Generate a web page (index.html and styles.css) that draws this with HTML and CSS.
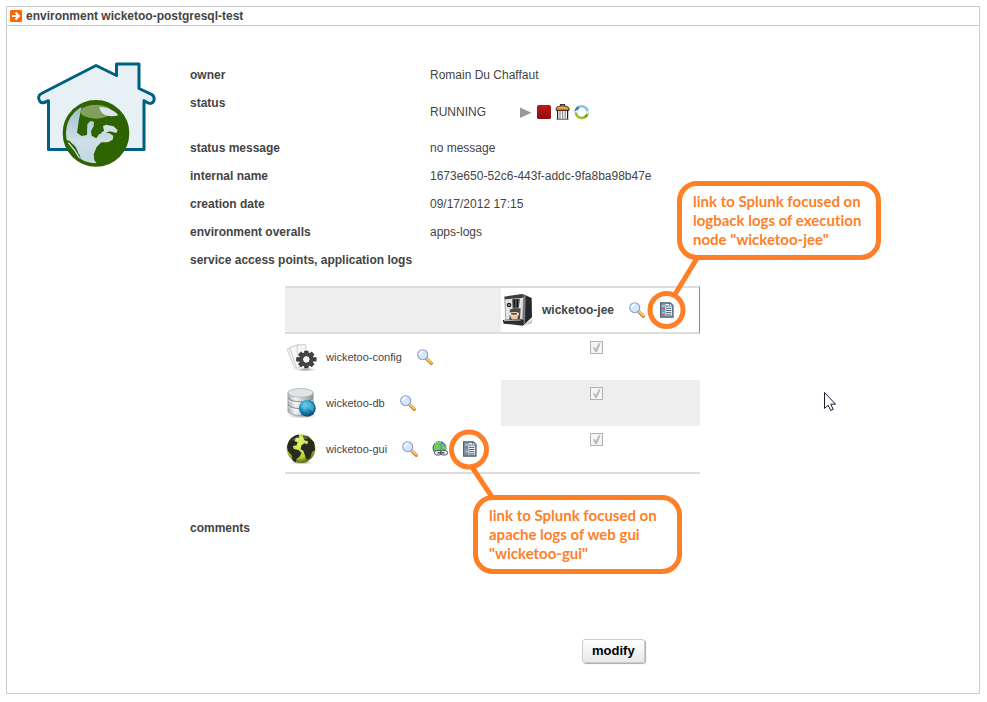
FILE: index.html
```html
<!DOCTYPE html>
<html lang="en">
<head>
<meta charset="utf-8">
<title>environment wicketoo-postgresql-test</title>
<link rel="stylesheet" href="styles.css">
</head>
<body>
<svg class="defs" aria-hidden="true">
  <defs>
    <linearGradient id="handle" x1="0" y1="0" x2="1" y2="1"><stop offset="0" stop-color="#ffd48a"/><stop offset="1" stop-color="#d98a18"/></linearGradient>
    <linearGradient id="metal" x1="0" y1="0" x2="1" y2="0"><stop offset="0" stop-color="#a9afb3"/><stop offset=".3" stop-color="#f2f4f5"/><stop offset="1" stop-color="#8d9397"/></linearGradient>
    <linearGradient id="ocean" x1="0" y1="0" x2="0" y2="1"><stop offset="0" stop-color="#9dbfcb"/><stop offset=".6" stop-color="#cfdfe7"/><stop offset="1" stop-color="#c3d8e2"/></linearGradient>
    <linearGradient id="red" x1="0" y1="0" x2="0" y2="1"><stop offset="0" stop-color="#c01818"/><stop offset="1" stop-color="#8c0c10"/></linearGradient>
    <linearGradient id="lid" x1="0" y1="0" x2="0" y2="1"><stop offset="0" stop-color="#ffc070"/><stop offset="1" stop-color="#e67a10"/></linearGradient>
    <radialGradient id="blueball" cx=".4" cy=".3" r=".7"><stop offset="0" stop-color="#7fd8ee"/><stop offset=".5" stop-color="#1f93bf"/><stop offset="1" stop-color="#07466c"/></radialGradient>
    <radialGradient id="limeball" cx=".45" cy=".35" r=".65"><stop offset="0" stop-color="#e4f56a"/><stop offset=".7" stop-color="#b6d529"/><stop offset="1" stop-color="#526a10"/></radialGradient>
    <radialGradient id="shade"><stop offset="0" stop-color="#000" stop-opacity=".4"/><stop offset="1" stop-color="#000" stop-opacity="0"/></radialGradient>
    <symbol id="magnifier" viewBox="0 0 16 16">
      <path d="M10 10l4.300 4.300" stroke="#b98232" stroke-width="3.200" stroke-linecap="round"/>
      <path d="M10 9.600l4.400 4.400" stroke="url(#handle)" stroke-width="2" stroke-linecap="round"/>
      <path d="M10 9.300l4.600 4.600" stroke="#ffc86a" stroke-width="1.400" stroke-linecap="round"/>
      <circle cx="5.700" cy="5.700" r="5" fill="#d3e9fb" stroke="#8f9bd2" stroke-width="1.100"/>
      <path d="M2.600 6a3.200 3.200 0 0 1 3.200-3.400" fill="none" stroke="#fff" stroke-width="1.600"/>
    </symbol>
    <symbol id="log" viewBox="0 0 16 16">
      <path d="M1.600.8h9.600l2.800 2.800v11.600H1.600z" fill="#8799a8" stroke="#4c6478" stroke-width="1.200"/>
      <path d="M6.500 2h4.200l2.300 2.200v9.500H6.500z" fill="#eef3f7"/>
      <path d="M10.500 1v3.200h3.300z" fill="#fff" stroke="#4c6478" stroke-width=".7"/>
      <path d="M7 4h2.500M7 6.300h5.300M7 8.500h5.300M7 10.700h5.300M7 12.900h5.300" stroke="#344c60" stroke-width=".9"/>
      <path d="M3.300 4h2.200M3.300 10.700h2.200" stroke="#8fd6fa" stroke-width="1.300"/>
      <path d="M3.300 6.400h2.200M3.300 12.800h2.200" stroke="#f04a30" stroke-width="1.500"/>
      <path d="M3.300 8.500h2.200" stroke="#55aee4" stroke-width="1.300"/>
    </symbol>
  </defs>
</svg>

<main class="panel">
  <header class="panel-title">
    <svg class="bullet" viewBox="0 0 12 12" aria-hidden="true"><rect width="12" height="12" rx="1" fill="#ff6600"/><path d="M2 6h6.500M5.500 2.500L9 6 5.500 9.500" fill="none" stroke="#fff" stroke-width="2"/></svg>
    <h1>environment wicketoo-postgresql-test</h1>
  </header>

  <div class="content">
    <svg class="house" viewBox="-1 -1 120 106" aria-hidden="true">
      <path d="M59 3.500L79.500 13.500V2H102v24.500l13 6.200c3 2 3 7-.5 8.500-3 1-5-1-7.500-2.500V87.500H11.500V38.700C8 40.500 5 42 3 39.500c-2.500-3-1.500-6.500 1.500-8z" fill="#e7f0f4" stroke="#006080" stroke-width="3" stroke-linejoin="round"/>
      <g transform="scale(.3333) translate(-111 -186)">
        <circle cx="288" cy="400" r="97" fill="#2d6300"/>
        <path d="M245 320l-8 38-6 40 14 10 16-3 1-32 9-10 11 2-1 14-8 14 2 14 14 8 8-12 10-4 20 0 13 8-2 12-14 8-20 0-14 14-9 22 2 18 8 10-46-6-7-22-14-28-14-12-14-4-6-20 10-48 20-26z" fill="url(#ocean)"/>
        <path d="M302 399l10-6-3-15 10-4 22 5 12 12-4 8-20-5-14 6z" fill="#d2e1e8"/>
        <path d="M205 428l18 22 18 28M212 424l20 18 6 20" stroke="#cfdfe7" stroke-width="4" fill="none"/>
        <ellipse cx="288" cy="335" rx="46" ry="21" fill="#80a05b"/>
        <path d="M298 321c28 0 48 13 57 25-20 5-52 6-57-25z" fill="#d7e6ed"/>
        <circle cx="288" cy="400" r="95" fill="none" stroke="#2d6300" stroke-width="10"/>
      </g>
    </svg>

    <div class="details">
      <dl class="fields">
        <dt>owner</dt><dd>Romain Du Chaffaut</dd>
        <dt class="tall">status</dt>
        <dd class="tall status">
          <span class="state">RUNNING</span>
          <button type="button" class="icon-button" aria-label="start"><svg viewBox="0 0 16 16"><path d="M3 3.500L14.500 8.800 3 14z" fill="#999"/></svg></button>
          <button type="button" class="icon-button" aria-label="stop"><svg viewBox="0 0 16 16"><rect x="1" y="1" width="14" height="14" rx="1.500" fill="url(#red)"/></svg></button>
          <button type="button" class="icon-button" aria-label="delete"><svg viewBox="0 0 16 16"><path d="M5.500 2V.6h4V2" fill="none" stroke="#333" stroke-width="1.200"/><path d="M2.600 6h10v9.300h-10z" fill="#fff" stroke="#222" stroke-width="1.200"/><path d="M5 7v7.500M7.600 7v7.500M10.200 7v7.500" stroke="#888" stroke-width="1.200"/><path d="M1.200 6.300V4.200C2.200 1.200 13 1.200 14 4.200v2.100z" fill="url(#lid)" stroke="#33230e"/><path d="M1 15.600h13" stroke="#aaa" stroke-width=".8"/></svg></button>
          <button type="button" class="icon-button" aria-label="refresh"><svg viewBox="0 0 16 16" fill="none" stroke-width="2.500"><path d="M1.800 8.500A5.900 5.900 0 0 1 5 2.900" stroke="#3177b5"/><path d="M4.600 3.100a5.900 5.900 0 0 1 9 4.400" stroke="#80c7ee"/><path d="M13.600 8a5.900 5.900 0 0 1-3.600 5.500" stroke="#6e9d16"/><path d="M10.600 13.200A5.900 5.900 0 0 1 1.900 9" stroke="#9dbf35"/><path d="M.3 8l2.500-2L4 8.500zM11.500 8.500l2 2 1.800-3z" fill="#fff"/></svg></button>
        </dd>
        <dt>status message</dt><dd>no message</dd>
        <dt>internal name</dt><dd>1673e650-52c6-443f-addc-9fa8ba98b47e</dd>
        <dt>creation date</dt><dd>09/17/2012 17:15</dd>
        <dt>environment overalls</dt><dd>apps-logs</dd>
        <dt class="wide">service access points, application logs</dt>
      </dl>

      <div class="services">
        <table>
          <thead>
            <tr>
              <td class="blank"></td>
              <th scope="col" class="node">
                <div class="entry">
                  <svg class="picture" viewBox="0 0 31 32" aria-hidden="true">
                    <g transform="scale(.3333) translate(-36 -42)">
                      <path d="M98 136l30-18-4 14z" fill="#ccc"/>
                      <path d="M98 42l27 12 1 58-26 24-8-10z" fill="#25282a"/>
                      <path d="M98 42l9 5-2 82-7 6z" fill="#777b7e"/>
                      <path d="M44 54l52-10 4 10-2 72-50 2z" fill="#e2e4e5" stroke="#777" stroke-width="2"/>
                      <path d="M42 50l54-8 6 6-6 6-50 4z" fill="#3c3f41"/>
                      <path d="M66 58l24-2-4 30-18 1z" fill="#55595b"/><path d="M73 58v24M82 57v25" stroke="#111" stroke-width="4"/>
                      <path d="M60 88l32-3-2 34-32 1z" fill="#55483e"/>
                      <circle cx="57" cy="75" r="7" fill="#25282a"/><circle cx="57" cy="75" r="3" fill="#999"/>
                      <path d="M58 102h28l-5 18H66z" fill="#e9c79f"/><ellipse cx="72" cy="101" rx="15" ry="5" fill="#fff"/><ellipse cx="72" cy="101" rx="10" ry="3" fill="#7c4215"/>
                      <path d="M38 120l56-3 8 5-3 15-58-6z" fill="#2b2d2f"/><path d="M42 122l50-2" stroke="#bbb" stroke-width="3"/>
                    </g>
                  </svg>
                  <span class="name">wicketoo-jee</span>
                  <a href="#jee" aria-label="inspect wicketoo-jee"><svg><use href="#magnifier"/></svg></a>
                  <a href="#jee-logs" aria-label="logs of wicketoo-jee"><svg><use href="#log"/></svg></a>
                </div>
              </th>
            </tr>
          </thead>
          <tbody>
            <tr>
              <td>
                <div class="entry">
                  <svg class="picture" viewBox="0 0 32 32" aria-hidden="true">
                    <path d="M1 8l8-3 7 18-7 5z" fill="#f1f1f1" stroke="#d0d0d0"/><path d="M4 6l9-3 6 19-8 6z" fill="#f8f8f8" stroke="#ccc"/><path d="M11 4l9-1 3 20-9 4z" fill="#f5f5f5" stroke="#ccc"/>
                    <ellipse cx="20" cy="29" rx="11" ry="2" fill="url(#shade)"/>
                    <g stroke="#3b3b3b" stroke-width="4.500"><path d="M21 9.500v18M10.500 18.500h21M14 12l14 13M28 12L14 25"/></g>
                    <circle cx="21" cy="18.500" r="7.500" fill="#444"/><circle cx="21" cy="18.500" r="4" fill="#f5f5f5" stroke="#1d1d1d"/>
                  </svg>
                  <span class="name">wicketoo-config</span>
                  <a href="#config" aria-label="inspect wicketoo-config"><svg><use href="#magnifier"/></svg></a>
                </div>
              </td>
              <td class="mark"><input type="checkbox" checked disabled aria-label="wicketoo-config on wicketoo-jee"></td>
            </tr>
            <tr>
              <td>
                <div class="entry">
                  <svg class="picture" viewBox="0 0 32 32" aria-hidden="true">
                    <ellipse cx="17" cy="29" rx="15" ry="3" fill="url(#shade)"/>
                    <path d="M2 5v20c2 5 24 5 26 0V5z" fill="url(#metal)" stroke="#8c9295" stroke-width=".7"/>
                    <path d="M2 11c3 5 23 5 26 0M2 18c3 5 23 5 26 0" fill="none" stroke="#7d8588" stroke-width="1"/>
                    <path d="M2 12.500c3 5 23 5 26 0M2 19.500c3 5 23 5 26 0" fill="none" stroke="#fff" stroke-width=".8"/>
                    <ellipse cx="15" cy="5.500" rx="13" ry="4.500" fill="#e2e5e6" stroke="#a5aaad" stroke-width=".8"/>
                    <circle cx="22" cy="21.500" r="8.700" fill="url(#blueball)"/>
                    <path d="M15 19l5-4 3 3-4 6zM24 15l5 4-1 6-5-4z" fill="#5fbddb" opacity=".6"/>
                  </svg>
                  <span class="name">wicketoo-db</span>
                  <a href="#db" aria-label="inspect wicketoo-db"><svg><use href="#magnifier"/></svg></a>
                </div>
              </td>
              <td class="mark shaded"><input type="checkbox" checked disabled aria-label="wicketoo-db on wicketoo-jee"></td>
            </tr>
            <tr>
              <td>
                <div class="entry">
                  <svg class="picture" viewBox="0 0 32 32" aria-hidden="true">
                    <ellipse cx="16" cy="30" rx="12" ry="2" fill="url(#shade)"/>
                    <circle cx="15.500" cy="15.500" r="14.800" fill="url(#limeball)"/>
                    <path d="M2 10C4 5 8 2 13 1l1 3-4 1-1 3 3 1-1 3-4 1 1 3 5 1 3 3-2 4-3 2-1 4-3-2-1-5-4-5-1-4z" fill="#282a20"/>
                    <path d="M17 2l6 1 6 6 1 8-3 2-2 6-4 2-2-6-1-3-3-2 1-4 3-2 3 1 1-3-4-1z" fill="#282a20"/>
                    <path d="M6 7c5-5 13-6 18-2-5 1-12 3-18 2z" fill="#fff" opacity=".25"/>
                  </svg>
                  <span class="name">wicketoo-gui</span>
                  <a href="#gui" aria-label="inspect wicketoo-gui"><svg><use href="#magnifier"/></svg></a>
                  <a href="#gui-site" aria-label="open wicketoo-gui"><svg viewBox="0 0 16 16"><circle cx="7.500" cy="7" r="6.500" fill="#4a9be0" stroke="#2b679c"/><path d="M2 5c2-4 5-4 7-4l-2 3 2 2-3 4-4-2zM10 3l4 3v3l-4-1z" fill="#76d03e"/><path d="M3 3c2-2 5-2 6-2" stroke="#d9f7c0"/><g fill="#eee" stroke="#555"><rect x="2.500" y="9.500" width="7" height="4.500" rx="2.200"/><rect x="8.500" y="9.500" width="7" height="4.500" rx="2.200"/></g><path d="M5.500 11.800h7" stroke="#555" stroke-width="1.500"/></svg></a>
                  <a href="#gui-logs" aria-label="logs of wicketoo-gui"><svg><use href="#log"/></svg></a>
                </div>
              </td>
              <td class="mark"><input type="checkbox" checked disabled aria-label="wicketoo-gui on wicketoo-jee"></td>
            </tr>
          </tbody>
        </table>

        <svg class="pointers" viewBox="0 0 415 188" aria-hidden="true">
          <circle cx="381.500" cy="24" r="16.500"/><path d="M389 10l25-41"/>
          <circle cx="184" cy="163.500" r="17.500"/><path d="M187 181l22 33"/>
        </svg>
        <p class="callout callout-node">link to Splunk focused on<br>logback logs of execution<br>node "wicketoo-jee"</p>
        <p class="callout callout-gui">link to Splunk focused on<br>apache logs of web gui<br>"wicketoo-gui"</p>
        <svg class="cursor" viewBox="0 0 12 19" aria-hidden="true"><path d="M.5.500v16l3.600-3.300 2.600 5.300 2.500-1.100-2.400-5.200h4.700z" fill="#fff" stroke="#1a1a33" stroke-width="1"/></svg>
      </div>

      <dl class="fields"><dt>comments</dt><dd></dd></dl>
      <div class="actions"><button type="button" class="modify">modify</button></div>
    </div>
  </div>
</main>
</body>
</html>
```
FILE: styles.css
```css
* { box-sizing: border-box; }

body {
  margin: 6px 7px 7px 6px;
  background: #fff;
  color: #444;
  font: 12px/18px "Liberation Sans", Arial, sans-serif;
}

svg { display: block; }
.defs { position: absolute; width: 0; height: 0; }

.panel { border: 1px solid #ccc; }

.panel-title {
  display: flex;
  align-items: center;
  gap: 4px;
  padding: 0 3px;
  border-bottom: 1px solid #ccc;
}
.panel-title h1 { margin: 0; font-size: 12px; line-height: 18px; }
.bullet { width: 12px; height: 12px; }

.content {
  display: flex;
  align-items: flex-start;
  gap: 34px;
  padding: 35px 0 30px 29px;
}
.house { flex: none; width: 120px; height: 106px; }
.details { flex: 1; min-width: 0; }

.fields {
  display: grid;
  grid-template-columns: 240px 1fr;
  margin: 0;
  line-height: 28px;
}
.fields dt { font-weight: bold; }
.fields dd { margin: 0; }
.fields .wide { grid-column: 1 / -1; }
.tall { height: 45px; }
.status { display: flex; align-items: center; gap: 3px; }
.state { width: 84px; }

.icon-button {
  width: 16px;
  height: 16px;
  padding: 0;
  border: 0;
  background: none;
}
.icon-button svg { width: 16px; height: 16px; }

.services {
  position: relative;
  width: 415px;
  margin: 12px 0 40px 95px;
}
table {
  width: 100%;
  border-collapse: separate;
  border-spacing: 0;
  table-layout: fixed;
  border-bottom: 2px solid #ddd;
  font-size: 11px;
}
td, th { height: 46px; padding: 0; text-align: left; }
thead td, thead th {
  height: 48px;
  border-top: 2px solid #ddd;
  border-bottom: 2px solid #ddd;
}
.blank { width: 216px; background: #eee; }
thead .node { border-right: 1px solid #888; font-size: 12px; }
.entry { display: flex; align-items: center; padding-left: 1px; }
.picture { width: 31px; height: 32px; margin-right: 9px; }
.name { margin-right: 1px; }
.entry a { margin-left: 14px; }
.entry a svg { width: 16px; height: 16px; }

.mark { padding: 7px 8px 0 0; text-align: center; vertical-align: top; line-height: 13px; }
.shaded { background: #eee; }
.mark input {
  appearance: none;
  position: relative;
  display: inline-block;
  width: 13px;
  height: 13px;
  margin: 0;
  border: 1px solid #b1b1b1;
  background: #f5f5f5;
  vertical-align: top;
}
.mark input::after {
  content: "";
  position: absolute;
  inset: 1px;
  background: #bbb;
  clip-path: polygon(10% 50%, 30% 45%, 43% 68%, 75% 0, 95% 5%, 55% 100%, 35% 100%);
}

.pointers {
  position: absolute;
  inset: 0;
  width: 100%;
  height: 188px;
  overflow: visible;
  fill: none;
  stroke: #ff7f27;
  stroke-width: 5px;
  pointer-events: none;
}
.callout {
  position: absolute;
  margin: 0;
  padding: 6px 11px;
  border: 5px solid #ff7f27;
  border-radius: 20px;
  background: #fff;
  color: #ff7f27;
  font: bold 15px/19px Lato, "Open Sans", sans-serif;
  font-variant-ligatures: none;
  white-space: nowrap;
}
.callout-node { top: -105px; left: 392px; width: 204px; }
.callout-gui { top: 209px; left: 188px; width: 209px; }
.cursor { position: absolute; top: 106px; left: 539px; width: 12px; height: 19px; }

.actions { padding: 97px 0 0 392px; }
.modify {
  display: block;
  height: 24px;
  padding: 0 9px;
  border: 1px solid #ccc;
  border-radius: 3px;
  background: linear-gradient(#fff, #e8e8e8);
  box-shadow: 1px 1px 1px #aaa;
  color: #000;
  font: bold 13px/20px "Liberation Sans", Arial, sans-serif;
}
```
